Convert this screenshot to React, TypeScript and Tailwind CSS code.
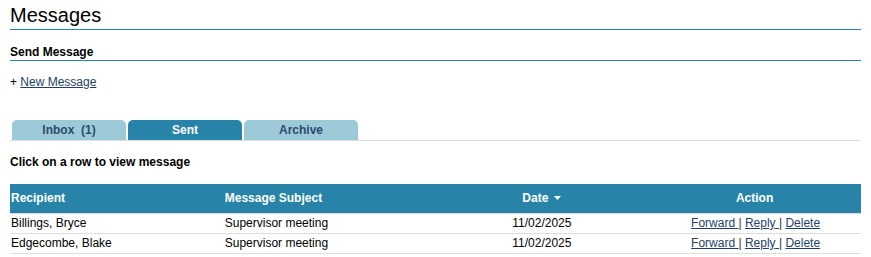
import React from "react";

type Row = {
  recipient: string;
  subject: string;
  date: string;
};

const rows: Row[] = [
  { recipient: "Billings, Bryce", subject: "Supervisor meeting", date: "11/02/2025" },
  { recipient: "Edgecombe, Blake", subject: "Supervisor meeting", date: "11/02/2025" },
];

const tabs = [
  { label: "Inbox\u00a0\u00a0(1)", active: false },
  { label: "Sent", active: true },
  { label: "Archive", active: false },
];

export default function App() {
  return (
    <div className="min-h-[257px] bg-white px-[10px] pt-[3px] font-['Liberation_Sans',Arial,sans-serif] text-[12px] leading-[16px] text-black">
      <h1 className="border-b border-[#2a84aa] pb-[2px] text-[20px] leading-[24px] font-normal">
        Messages
      </h1>

      <h2 className="mt-[14px] border-b border-[#2a84aa] font-bold">Send Message</h2>

      <div className="mt-[13px]">
        +{" "}
        <a href="#" className="text-[#243f66] underline">
          New Message
        </a>
      </div>

      {/* tabs */}
      <div className="mt-[30px] flex gap-[2px] border-b border-[#dddddd] pl-[2px]">
        {tabs.map((t) => (
          <div
            key={t.label}
            className={
              t.active
                ? "flex h-[20px] w-[114px] items-center justify-center rounded-t-[5px] bg-[#2784a8] font-bold text-white"
                : "flex h-[20px] w-[114px] items-center justify-center rounded-t-[5px] bg-[#9ccad9] font-bold text-[#2c4a6d]"
            }
          >
            {t.label}
          </div>
        ))}
      </div>

      <p className="mt-[13px] font-bold">Click on a row to view message</p>

      <table className="mt-[14px] w-full table-fixed border-collapse">
        <thead>
          <tr className="h-[29px] border-b border-[#dddddd] bg-[#2784a8] font-bold text-white">
            <th className="px-px text-left">Recipient</th>
            <th className="px-[2px] text-left">Message Subject</th>
            <th className="text-center">
              <span className="inline-flex items-center gap-[6px]">
                Date
                <svg width="7" height="4" viewBox="0 0 7 4">
                  <path d="M0 0h7L3.5 4z" fill="#ffffff" />
                </svg>
              </span>
            </th>
            <th className="text-center">Action</th>
          </tr>
        </thead>
        <tbody>
          {rows.map((r) => (
            <tr key={r.recipient} className="h-[20px] cursor-pointer border-b border-[#dddddd]">
              <td className="px-px">{r.recipient}</td>
              <td className="px-[2px]">{r.subject}</td>
              <td className="text-center">{r.date}</td>
              <td className="pl-[2px] text-center text-[#243f66]">
                <a href="#" className="underline">
                  Forward{" "}
                </a>
                <span className="text-[#333]">|</span>{" "}
                <a href="#" className="underline">
                  Reply{" "}
                </a>
                <span className="text-[#333]">|</span>{" "}
                <a href="#" className="underline">
                  Delete
                </a>
              </td>
            </tr>
          ))}
        </tbody>
      </table>
    </div>
  );
}
